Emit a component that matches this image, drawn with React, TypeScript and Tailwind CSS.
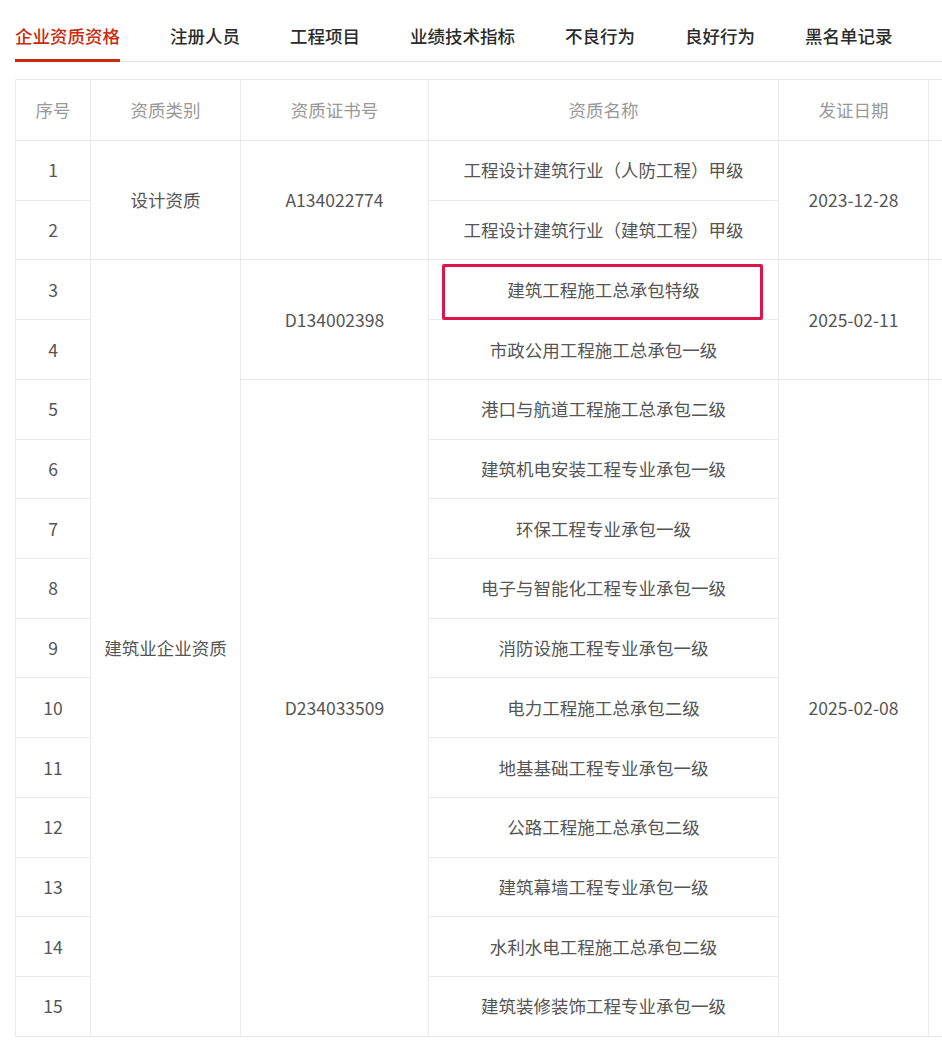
import React from 'react';

const tabs = ['企业资质资格', '注册人员', '工程项目', '业绩技术指标', '不良行为', '良好行为', '黑名单记录'];

const names = [
  '工程设计建筑行业（人防工程）甲级',
  '工程设计建筑行业（建筑工程）甲级',
  '建筑工程施工总承包特级',
  '市政公用工程施工总承包一级',
  '港口与航道工程施工总承包二级',
  '建筑机电安装工程专业承包一级',
  '环保工程专业承包一级',
  '电子与智能化工程专业承包一级',
  '消防设施工程专业承包一级',
  '电力工程施工总承包二级',
  '地基基础工程专业承包一级',
  '公路工程施工总承包二级',
  '建筑幕墙工程专业承包一级',
  '水利水电工程施工总承包二级',
  '建筑装修装饰工程专业承包一级',
];

// groups start at row index -> span
const typeSpans: Record<number, [string, number]> = { 0: ['设计资质', 2], 2: ['建筑业企业资质', 13] };
const certSpans: Record<number, [string, number]> = { 0: ['A134022774', 2], 2: ['D134002398', 2], 4: ['D234033509', 11] };
const dateSpans: Record<number, [string, number]> = { 0: ['2023-12-28', 2], 2: ['2025-02-11', 2], 4: ['2025-02-08', 11] };

const td = 'border border-[#e8eaf0] text-center align-middle leading-[24px]';

export default function App() {
  return (
    <div className="bg-white w-[942px] h-[1049px] overflow-hidden pl-[15px] text-[#555]" style={{ fontFamily: '"Noto Sans CJK SC", "Noto Sans", sans-serif' }}>
      <div className="flex gap-[50px] border-b border-[#e0e0e0] h-[62px] pt-[22px]">
        {tabs.map((t, i) => (
          <div
            key={t}
            className={
              i === 0
                ? 'relative text-[17.5px] font-medium leading-[28px] text-[#c9290f] whitespace-nowrap'
                : 'text-[17.5px] font-medium leading-[28px] text-[#2b2b2b] whitespace-nowrap'
            }
          >
            {t}
            {i === 0 && <div className="absolute left-0 right-0 top-[37px] h-[3px] bg-[#c9290f]" />}
          </div>
        ))}
      </div>

      <div className="mt-[17px] w-[1000px]">
        <table className="border-collapse table-fixed w-[1063px] text-[17.5px]">
          <colgroup>
            <col className="w-[75px]" />
            <col className="w-[150px]" />
            <col className="w-[188px]" />
            <col className="w-[350px]" />
            <col className="w-[150px]" />
            <col className="w-[150px]" />
          </colgroup>
          <thead>
            <tr className="h-[61px] text-[#999]">
              <th className={`${td} font-normal`}>序号</th>
              <th className={`${td} font-normal`}>资质类别</th>
              <th className={`${td} font-normal`}>资质证书号</th>
              <th className={`${td} font-normal`}>资质名称</th>
              <th className={`${td} font-normal`}>发证日期</th>
              <th className={`${td} font-normal`}></th>
            </tr>
          </thead>
          <tbody>
            {names.map((n, i) => (
              <tr key={i} className="h-[59.73px]">
                <td className={td}>{i + 1}</td>
                {typeSpans[i] && (
                  <td className={td} rowSpan={typeSpans[i][1]}>
                    {typeSpans[i][0]}
                  </td>
                )}
                {certSpans[i] && (
                  <td className={td} rowSpan={certSpans[i][1]}>
                    {certSpans[i][0]}
                  </td>
                )}
                <td className={`${td} relative`}>
                  {n}
                  {i === 2 && (
                    <div className="absolute left-[13px] right-[15px] top-[4px] bottom-[-1px] border-[3px] border-[#dc1449] rounded-[2px]" />
                  )}
                </td>
                {dateSpans[i] && (
                  <td className={td} rowSpan={dateSpans[i][1]}>
                    {dateSpans[i][0]}
                  </td>
                )}
                {dateSpans[i] && <td className={td} rowSpan={dateSpans[i][1]}></td>}
              </tr>
            ))}
          </tbody>
        </table>
      </div>
    </div>
  );
}
